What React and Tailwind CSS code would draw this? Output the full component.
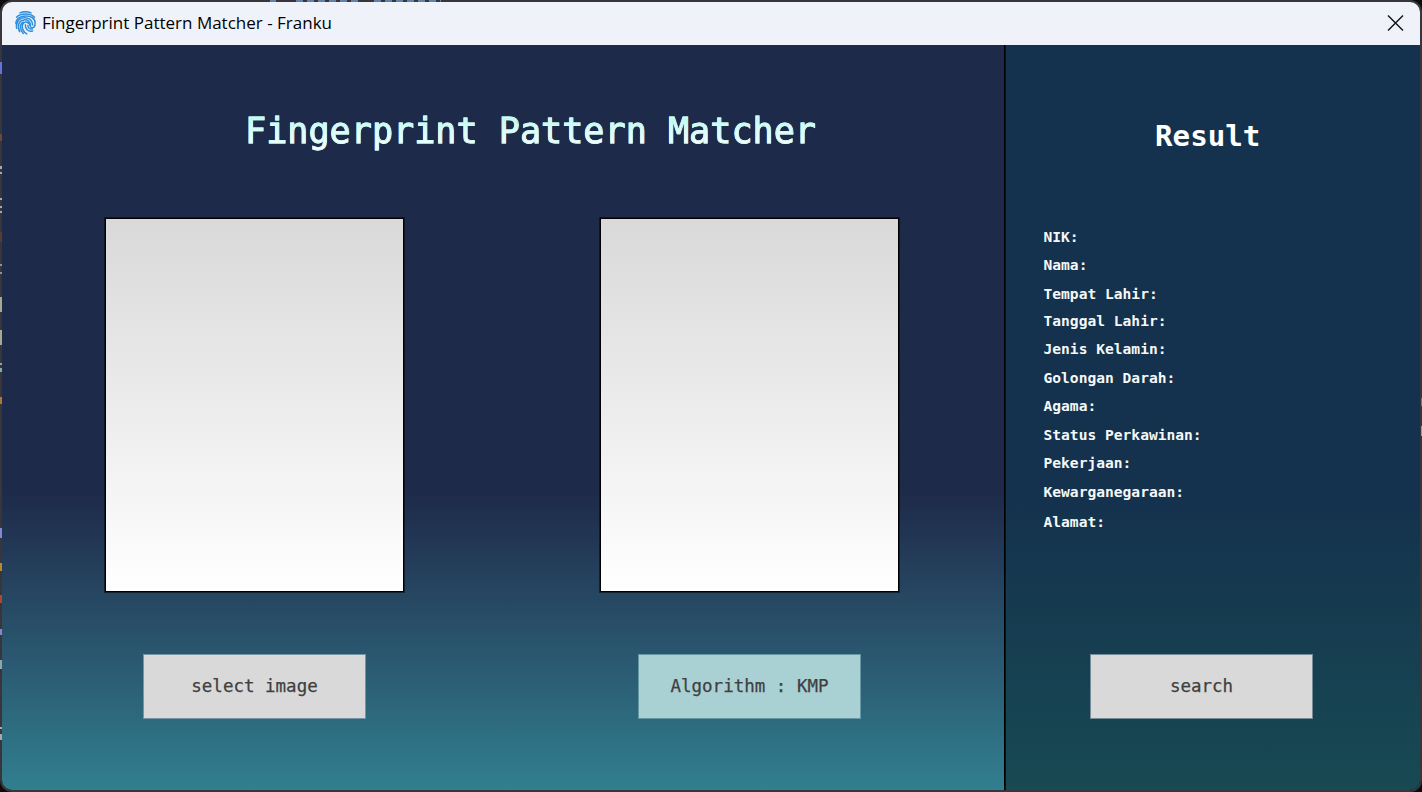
const mono = "[font-family:'DejaVu_Sans_Mono',monospace]";

const fields = [
  ["NIK:", "h-7"],
  ["Nama:", "h-[29px]"],
  ["Tempat Lahir:", "h-[27px]"],
  ["Tanggal Lahir:", "h-7"],
  ["Jenis Kelamin:", "h-[29px]"],
  ["Golongan Darah:", "h-7"],
  ["Agama:", "h-[29px]"],
  ["Status Perkawinan:", "h-7"],
  ["Pekerjaan:", "h-[29px]"],
  ["Kewarganegaraan:", "h-[30px]"],
  ["Alamat:", "h-7"],
];

// Slivers of the editor window that show past the left edge of the dialog.
const slivers = [
  "top-[62px] h-3 bg-[#6a70d8]",
  "top-[134px] h-[7px] bg-[#6b4a38]",
  "top-[166px] h-[3px] bg-[#a9a9a9]",
  "top-[172px] h-[2px] bg-[#a9a9a9]",
  "top-[198px] h-[2px] bg-[#a9a9a9]",
  "top-[206px] h-[2px] bg-[#a9a9a9]",
  "top-[211px] h-[2px] bg-[#a9a9a9]",
  "top-[232px] h-[10px] bg-[#5c3a34]",
  "top-[264px] h-[2px] bg-[#9a8f80]",
  "top-[272px] h-[2px] bg-[#9a8f80]",
  "top-[297px] h-[15px] bg-[#aaa797]",
  "top-[330px] h-[15px] bg-[#aaa797]",
  "top-[363px] h-[2px] bg-[#8fa6ab]",
  "top-[368px] h-[4px] bg-[#8fa6ab]",
  "top-[397px] h-[7px] bg-[#b5772f]",
  "top-[528px] h-[10px] bg-[#8587cf]",
  "top-[563px] h-[8px] bg-[#b18b2c]",
  "top-[595px] h-[8px] bg-[#b0472f]",
  "top-[629px] h-[6px] bg-[#8587cf]",
  "top-[660px] h-[9px] bg-[#8fa6ab]",
  "top-[727px] h-[2px] bg-[#a9a9a9]",
  "top-[734px] h-[6px] bg-[#a9a9a9]",
];

function FingerprintIcon() {
  return (
    <svg className="relative -top-px h-6 w-[21px] shrink-0" viewBox="0 0 21 24" fill="none" stroke="#2f8fdc" strokeWidth="1.5" strokeLinecap="round">
      <path d="M5 1.900C8.500.3 12.500.3 16 1.900" />
      <path d="M1.500 6.300C5.300 1.900 15.700 1.900 19.500 6.300" />
      <path d="M.9 12.500C1 2.600 20 2.600 20.100 11.500c.1 2.600-.2 3.800-1.100 4.700-1.500 1.200-3.600.4-4-1.600-.6-3.900-5.800-4.800-7.400-1.200-1.200 3.200.6 7.600 4.200 9.500" />
      <path d="M1.700 17.300C-.1 8.300 7.500 5.700 12.500 7.100c3.200 1 5 3.400 5.100 6.900" />
      <path d="M4.600 20.600C2 14.500 3.600 9.600 9 8.900c3.800-.4 6.200 2 6.500 5.300" />
      <path d="M8.300 22.500C4.500 18.500 4.400 12.500 8.500 11.200" />
      <path d="M10.400 13.700c-.4 4.200 2.600 7.200 7.200 6.300" />
      <path d="M12.800 14.500c.3 2.400 1.800 3.700 4.600 3.500" />
    </svg>
  );
}

function Button({ children, className }) {
  return (
    <button className={`h-[65px] w-[223px] border text-[17.500px] text-[#404040] [-webkit-text-stroke:0.25px_#404040] ${mono} ${className}`}>
      {children}
    </button>
  );
}

function Preview() {
  return (
    <div className="h-[374px] w-[299px] border border-black bg-linear-to-b from-[#d9d9d9] to-white shadow-[0_0_0_1px_rgba(0,0,0,0.5)]" />
  );
}

export default function App() {
  return (
    <div className="relative h-[792px] w-[1422px] overflow-hidden bg-[#0b0b0d]">
      <div className="flex h-[792px] flex-col overflow-hidden rounded-xl border-2 border-[#38363a]">
        <header className="flex h-[43px] shrink-0 items-center bg-[#eff3f9] pr-4 pl-[13px]">
          <FingerprintIcon />
          <h1 className="ml-[6px] flex-1 pb-[2px] text-[17px] whitespace-nowrap text-black [font-family:'Open_Sans',sans-serif]">
            Fingerprint Pattern Matcher - Franku
          </h1>
          <svg className="mb-[2px] h-[18px] w-[17px]" viewBox="0 0 17 18" stroke="#111" strokeWidth="1.400">
            <path d="M1 1.500l15 15M16 1.500l-15 15" />
          </svg>
        </header>
        <div className="flex flex-1">
          <main className="w-[1002px] bg-linear-to-b from-[#1e2a4a] from-60% to-[#317f8f]">
            <h2 className={`pt-[61px] pl-[243px] text-[35.130px] leading-[50px] whitespace-pre ${mono}`}>
              <span className="bg-linear-to-b from-[#bdfaf2] from-20% to-white to-90% bg-clip-text text-transparent [-webkit-text-stroke:0.8px_#d4fcf7]">
                Fingerprint Pattern Matcher
              </span>
            </h2>
            <div className="mt-[62px] flex gap-[196px] pl-[103px]">
              <Preview />
              <Preview />
            </div>
            <div className="mt-[62px] flex gap-[272px] pl-[141px]">
              <Button className="border-[#7594a4] bg-[#d9d9d9]">select image</Button>
              <Button className="border-[#6597a5] bg-[#a9d0d3]">Algorithm : KMP</Button>
            </div>
          </main>
          <div className="w-px bg-black" />
          <aside className="flex flex-1 flex-col border-l border-[#07131e] bg-linear-to-b from-[#14314d] from-60% to-[#184a53]">
            <h2 className={`pt-[71px] pl-[149px] text-[29.200px] leading-[40px] font-bold text-white ${mono}`}>Result</h2>
            <ul className={`mt-[67px] h-[313px] pl-[37.500px] text-[14.600px] font-bold text-[#f4f8f8] ${mono}`}>
              {fields.map(([label, height]) => (
                <li key={label} className={`${height} leading-7`}>{label}</li>
              ))}
            </ul>
            <div className="mt-[118px] pl-[84px]">
              <Button className="border-[#758b98] bg-[#d9d9d9]">search</Button>
            </div>
          </aside>
        </div>
      </div>
      <div aria-hidden="true">
        {slivers.map((classes) => (
          <i key={classes} className={`absolute left-0 w-[2px] ${classes}`} />
        ))}
        <i className="absolute top-0 left-[270px] h-[2px] w-[6px] bg-[#5f82ab]" />
        <i className="absolute top-0 left-[296px] h-[2px] w-[62px] bg-[repeating-linear-gradient(90deg,#5f82ab_0_7px,#38363a_7px_11px)]" />
        <i className="absolute top-0 left-[374px] h-[2px] w-[67px] bg-[repeating-linear-gradient(90deg,#5f82ab_0_7px,#38363a_7px_11px)]" />
        <i className="absolute top-[398px] right-0 h-[8px] w-px bg-[#9a6a3a]" />
        <i className="absolute top-[426px] right-0 h-[10px] w-px bg-[#9a9a9a]" />
      </div>
    </div>
  );
}
